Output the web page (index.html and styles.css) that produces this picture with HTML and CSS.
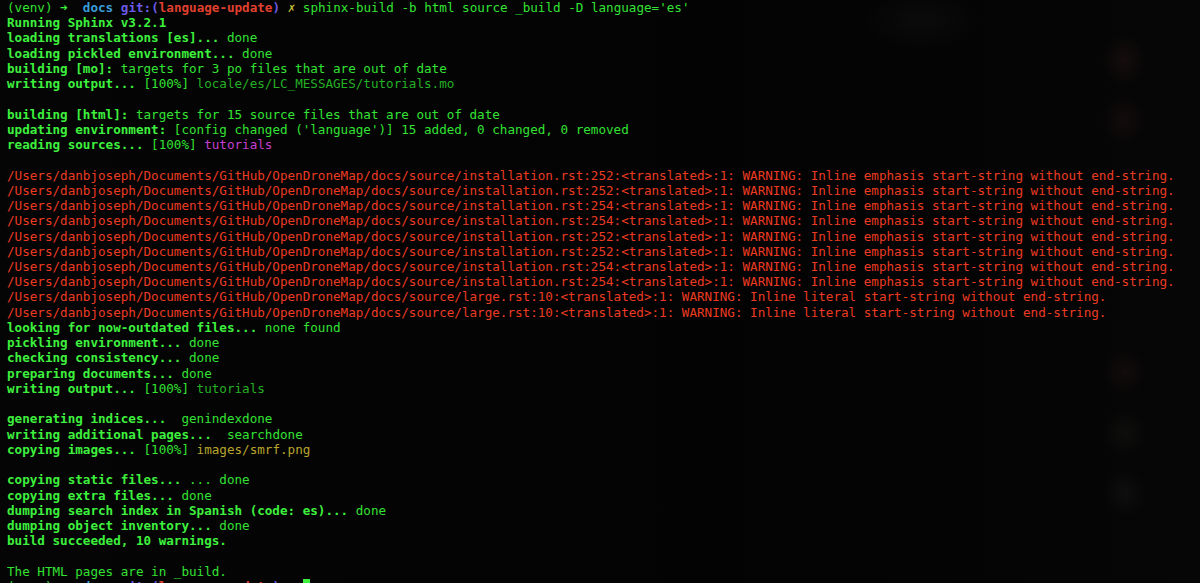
FILE: index.html
```html
<!DOCTYPE html>
<html lang="en">

<head>
  <meta charset="UTF-8" />
  <meta name="viewport" content="width=device-width, initial-scale=1.0" />
  <title>sphinx-build</title>
  <link rel="stylesheet" href="styles.css">
</head>

<body>
  <div class="term">
<pre class="out"><span class="g">(venv)</span> <span class="g b">➜</span>  <span class="cy b">docs</span> <span class="pu b">git:(</span><span class="rd b">language-update</span><span class="pu b">)</span> <span class="ye b">✗</span> <span class="g">sphinx-build -b html source _build -D language='es'</span>
<span class="g b">Running Sphinx v3.2.1</span>
<span class="g b">loading translations [es]... </span><span class="g">done</span>
<span class="g b">loading pickled environment... </span><span class="g">done</span>
<span class="g b">building [mo]: </span><span class="g">targets for 3 po files that are out of date</span>
<span class="g b">writing output... </span><span class="g">[100%] </span><span class="dg">locale/es/LC_MESSAGES/tutorials.mo</span>

<span class="g b">building [html]: </span><span class="g">targets for 15 source files that are out of date</span>
<span class="g b">updating environment: </span><span class="g">[config changed ('language')] 15 added, 0 changed, 0 removed</span>
<span class="g b">reading sources... </span><span class="g">[100%] </span><span class="mg">tutorials</span>

<span class="r">/Users/danbjoseph/Documents/GitHub/OpenDroneMap/docs/source/installation.rst:252:&lt;translated&gt;:1: WARNING: Inline emphasis start-string without end-string.</span>
<span class="r">/Users/danbjoseph/Documents/GitHub/OpenDroneMap/docs/source/installation.rst:252:&lt;translated&gt;:1: WARNING: Inline emphasis start-string without end-string.</span>
<span class="r">/Users/danbjoseph/Documents/GitHub/OpenDroneMap/docs/source/installation.rst:254:&lt;translated&gt;:1: WARNING: Inline emphasis start-string without end-string.</span>
<span class="r">/Users/danbjoseph/Documents/GitHub/OpenDroneMap/docs/source/installation.rst:254:&lt;translated&gt;:1: WARNING: Inline emphasis start-string without end-string.</span>
<span class="r">/Users/danbjoseph/Documents/GitHub/OpenDroneMap/docs/source/installation.rst:252:&lt;translated&gt;:1: WARNING: Inline emphasis start-string without end-string.</span>
<span class="r">/Users/danbjoseph/Documents/GitHub/OpenDroneMap/docs/source/installation.rst:252:&lt;translated&gt;:1: WARNING: Inline emphasis start-string without end-string.</span>
<span class="r">/Users/danbjoseph/Documents/GitHub/OpenDroneMap/docs/source/installation.rst:254:&lt;translated&gt;:1: WARNING: Inline emphasis start-string without end-string.</span>
<span class="r">/Users/danbjoseph/Documents/GitHub/OpenDroneMap/docs/source/installation.rst:254:&lt;translated&gt;:1: WARNING: Inline emphasis start-string without end-string.</span>
<span class="r">/Users/danbjoseph/Documents/GitHub/OpenDroneMap/docs/source/large.rst:10:&lt;translated&gt;:1: WARNING: Inline literal start-string without end-string.</span>
<span class="r">/Users/danbjoseph/Documents/GitHub/OpenDroneMap/docs/source/large.rst:10:&lt;translated&gt;:1: WARNING: Inline literal start-string without end-string.</span>
<span class="g b">looking for now-outdated files... </span><span class="g">none found</span>
<span class="g b">pickling environment... </span><span class="g">done</span>
<span class="g b">checking consistency... </span><span class="g">done</span>
<span class="g b">preparing documents... </span><span class="g">done</span>
<span class="g b">writing output... </span><span class="g">[100%] </span><span class="dg">tutorials</span>

<span class="g b">generating indices... </span><span class="g"> genindexdone</span>
<span class="g b">writing additional pages... </span><span class="g"> searchdone</span>
<span class="g b">copying images... </span><span class="g">[100%] </span><span class="ol">images/smrf.png</span>

<span class="g b">copying static files... </span><span class="g">... done</span>
<span class="g b">copying extra files... </span><span class="g">done</span>
<span class="g b">dumping search index in Spanish (code: es)... </span><span class="g">done</span>
<span class="g b">dumping object inventory... </span><span class="g">done</span>
<span class="g b">build succeeded, 10 warnings.</span>

<span class="g">The HTML pages are in _build.</span>
<span class="g">(venv)</span> <span class="g b">➜</span>  <span class="cy b">docs</span> <span class="pu b">git:(</span><span class="rd b">language-update</span><span class="pu b">)</span> <span class="ye b">✗</span> <span class="cursor"> </span></pre>
  </div>
</body>

</html>
```

FILE: styles.css
```css
* {
  box-sizing: border-box;
}

html,
body {
  margin: 0;
  height: 100%;
}

body {
  overflow: hidden;
  background-color: #040404;
  background-image:
    radial-gradient(ellipse 22px 26px at 1124px 60px, rgba(60, 30, 30, 0.3), transparent),
    radial-gradient(ellipse 22px 26px at 1124px 120px, rgba(60, 30, 30, 0.25), transparent),
    radial-gradient(ellipse 22px 24px at 1125px 372px, rgba(55, 30, 28, 0.25), transparent),
    radial-gradient(ellipse 22px 24px at 1125px 433px, rgba(40, 40, 36, 0.25), transparent),
    radial-gradient(ellipse 22px 24px at 1125px 493px, rgba(40, 40, 40, 0.25), transparent),
    radial-gradient(ellipse 60px 30px at 920px 20px, rgba(30, 30, 30, 0.25), transparent),
    linear-gradient(90deg, #050505 0%, #030303 60%, #060606 100%);
}

.term {
  padding: 0 7px;
}

.out {
  margin: 0;
  font-family: "DejaVu Sans Mono", "Liberation Mono", monospace;
  font-size: 12.6px;
  line-height: 15.24px;
  color: #2fd82f;
  white-space: pre;
}

.b {
  font-weight: bold;
}

.g {
  color: #33e233;
}

.g.b {
  color: #3ef03e;
}

.dg {
  color: #24b024;
}

.r {
  color: #ec3b22;
}

.mg {
  color: #c63fd0;
}

.ol {
  color: #b9a52c;
}

.cy {
  color: #3a9dd8;
}

.pu {
  color: #6a5ae6;
}

.rd {
  color: #e0402f;
}

.ye {
  color: #c9c23a;
}

.cursor {
  background: #3ef03e;
}
```
